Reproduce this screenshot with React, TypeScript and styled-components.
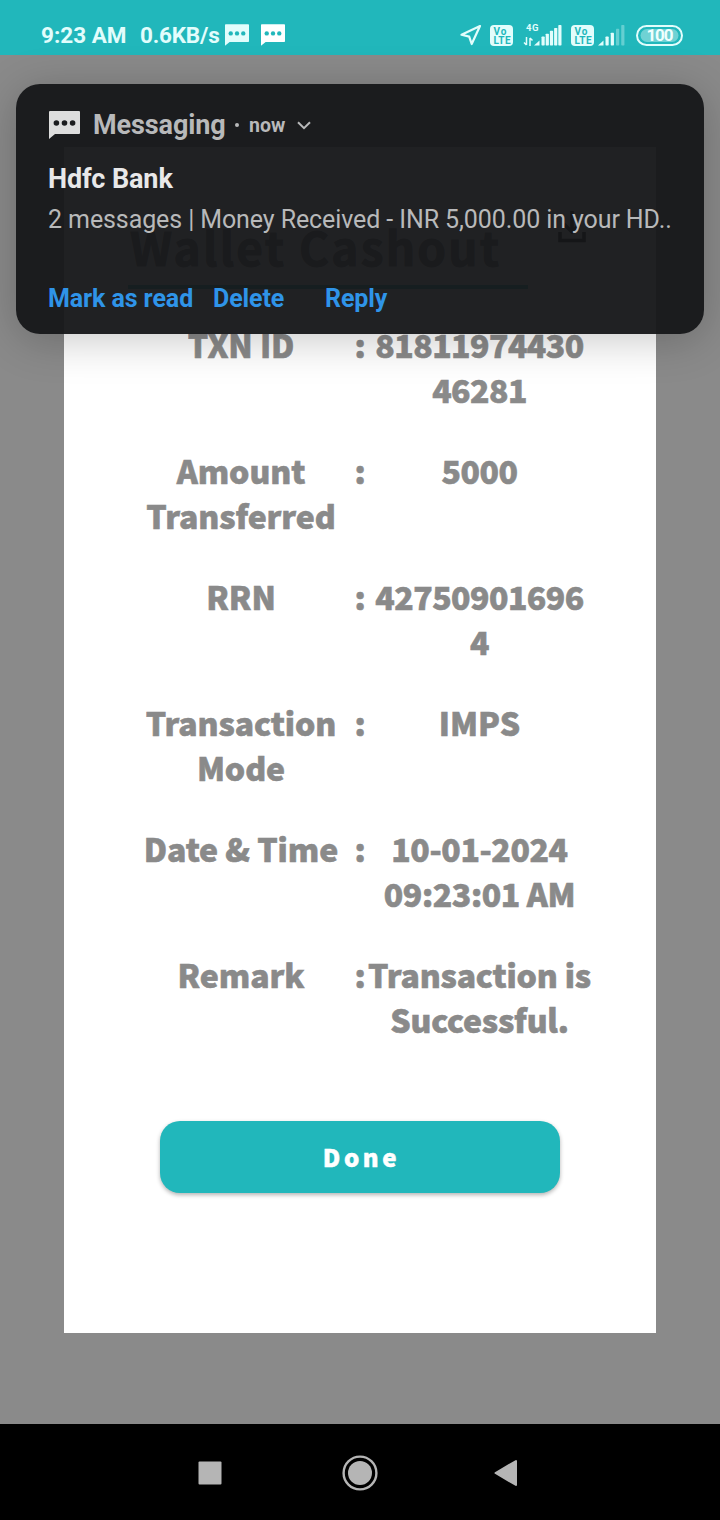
import React from "react";
import styled, { createGlobalStyle } from "styled-components";

const teal = "#21b7bb";
const pale = "#e2fdfc";

const GlobalStyle = createGlobalStyle`
  * { box-sizing: border-box; }
  body { margin: 0; background: #8a8a8a; }
  button { font: inherit; border: 0; background: none; padding: 0; margin: 0; }
  svg { display: block; flex: none; }
`;

const Screen = styled.div`
  position: relative;
  display: flex;
  flex-direction: column;
  width: 720px;
  height: 1520px;
  overflow: hidden;
  background: #8a8a8a;
`;

const StatusBar = styled.header`
  display: flex;
  align-items: flex-start;
  justify-content: space-between;
  height: 55px;
  flex: none;
  padding: 20px 37px 0 41px;
  background: ${teal};
  color: ${pale};
  font: 700 22.5px/30px Roboto, sans-serif;
`;

const StatusGroup = styled.div`
  display: flex;
  align-items: center;
  height: 30px;
`;

const StatusText = styled.span<{ $width: number; $spacing?: number }>`
  width: ${(p) => p.$width}px;
  letter-spacing: ${(p) => p.$spacing ?? 0}px;
  white-space: nowrap;
`;

const Gap = styled.span<{ $size: number }>`
  width: ${(p) => p.$size}px;
  flex: none;
`;

const Backdrop = styled.main`
  flex: 1;
  display: flex;
  flex-direction: column;
  align-items: center;
  padding-top: 92px;
`;

const Dialog = styled.section`
  display: flex;
  flex-direction: column;
  align-items: center;
  width: 592px;
  height: 1186px;
  background: #fff;
  color: #8a8a8a;
  font: 900 32px/45px "Noto Sans CJK SC", sans-serif;
`;

const DialogHeader = styled.div`
  display: flex;
  align-items: flex-start;
  width: 464px;
  height: 142px;
  padding: 64px 6px 0 2px;
  justify-content: space-between;
`;

const Title = styled.h1`
  margin: 5px 0 0;
  color: #6f6f6f;
  font-size: 46px;
  line-height: 60px;
  letter-spacing: 2.2px;
  -webkit-text-stroke: 1px currentColor;
  white-space: nowrap;
`;

const Rule = styled.hr`
  width: 400px;
  height: 4px;
  margin: -4px 64px 1px 0;
  border: 0;
  background: ${teal};
  align-self: center;
`;

const Details = styled.dl`
  display: flex;
  flex-direction: column;
  gap: 36px;
  width: 464px;
  margin: 32px 0 0;
  -webkit-text-stroke: 0.6px currentColor;
`;

const DetailRow = styled.div`
  display: grid;
  grid-template-columns: 226px 12px 227px;
  height: 90px;
  text-align: center;
  white-space: pre;
`;

const Label = styled.dt`
  margin: 0;
  letter-spacing: -0.1px;
`;

const Value = styled.dd<{ $spacing?: number }>`
  margin: 0;
  letter-spacing: ${(p) => p.$spacing ?? -0.55}px;
`;

const DoneButton = styled.button`
  width: 400px;
  height: 72px;
  margin-top: 79px;
  padding: 0 0 2px 3px;
  border-radius: 20px;
  background: ${teal};
  box-shadow: 0 2px 4px rgba(0, 0, 0, 0.3);
  color: #fff;
  font-size: 24px;
  letter-spacing: 3.6px;
  -webkit-text-stroke: 0.5px currentColor;
`;

const Notification = styled.aside`
  position: absolute;
  left: 16px;
  top: 84px;
  width: 688px;
  height: 250px;
  padding: 23px 32px 0;
  border-radius: 24px;
  background: rgba(22, 23, 25, 0.957);
  box-shadow: 0 6px 44px rgba(0, 0, 0, 0.22);
  color: #b8b9ba;
  font-family: Roboto, sans-serif;
`;

const AppLine = styled.div`
  display: flex;
  align-items: center;
  height: 36px;
`;

const AppName = styled.span`
  width: 134px;
  margin-left: 13px;
  padding-bottom: 1px;
  font-size: 27px;
  line-height: 34px;
  font-weight: 700;
  letter-spacing: -0.1px;
  white-space: nowrap;
`;

const Dot = styled.span`
  width: 4px;
  height: 4px;
  margin: 0 10px 0 8px;
  border-radius: 50%;
  background: currentColor;
`;

const Age = styled.span`
  width: 37px;
  margin-right: 11px;
  font-size: 19.5px;
  font-weight: 700;
`;

const Sender = styled.div`
  margin-top: 19px;
  color: #e8e8e9;
  font-size: 27px;
  line-height: 34px;
  font-weight: 700;
  letter-spacing: -0.1px;
`;

const Message = styled.div`
  margin-top: 7px;
  font-size: 25px;
  line-height: 34px;
  letter-spacing: -0.1px;
  white-space: nowrap;
`;

const Actions = styled.div`
  display: flex;
  margin-top: 45px;
`;

const Action = styled.button<{ $width: number }>`
  width: ${(p) => p.$width}px;
  color: #2f94e8;
  font-size: 25px;
  line-height: 34px;
  font-weight: 700;
  letter-spacing: -0.1px;
  text-align: left;
  white-space: nowrap;
`;

const NavBar = styled.nav`
  display: flex;
  align-items: center;
  height: 96px;
  flex: none;
  padding: 1px 0 0 198px;
  background: #000;
`;

const ChatIcon = ({ width, height, fill, dots }: { width: number; height: number; fill: string; dots: string }) => (
  <svg width={width} height={height} viewBox="0 0 31 28">
    <path d="M1 0H30Q31 0 31 1V22Q31 23 30 23H6L0 28V1Q0 0 1 0Z" fill={fill} />
    <g fill={dots}>
      <circle cx="7.4" cy="12" r="2.8" />
      <circle cx="15.5" cy="12" r="2.8" />
      <circle cx="23.6" cy="12" r="2.8" />
    </g>
  </svg>
);

const LocationIcon = () => (
  <svg width="22" height="22" viewBox="0 0 22 22" fill="none" stroke={pale} strokeWidth="2.2" strokeLinejoin="round">
    <path d="M20 2L1.5 10.7L9.2 12.6L11.7 20Z" />
  </svg>
);

const VolteIcon = () => (
  <svg width="23" height="21" viewBox="0 0 23 21">
    <rect width="23" height="21" rx="4" fill={pale} />
    <g fill={teal} fontFamily="Roboto, sans-serif" fontWeight="700" fontSize="10">
      <text x="3.5" y="9.5" textLength="13">Vo</text>
      <text x="3.5" y="18.5" textLength="17">LTE</text>
    </g>
  </svg>
);

const Bars = ({ count, active }: { count: number; active: number }) => (
  <svg width="28" height="21" viewBox="0 0 28 21" fill={pale}>
    <path d="M0 20.5L5.5 15.5V20.5Z" />
    {Array.from({ length: count }, (_, i) => {
      const step = 21 / count;
      const h = 9 + (11.5 * i) / (count - 1);
      return (
        <rect key={i} x={7.5 + i * step} y={20.5 - h} width="3.2" height={h} rx="0.7" opacity={i < active ? 1 : 0.35} />
      );
    })}
  </svg>
);

const DataIcon = () => (
  <svg width="10" height="24" viewBox="0 0 10 24" overflow="visible">
    <text x="2" y="8" textLength="12.5" fill={pale} fontFamily="Roboto, sans-serif" fontWeight="700" fontSize="9.5">4G</text>
    <path d="M2.5 14V22M0 19.5L2.5 22M6 23V15M6 15L8.5 17.5" stroke={pale} strokeWidth="1.5" fill="none" />
  </svg>
);

const BatteryIcon = () => (
  <svg width="47" height="21" viewBox="0 0 47 21">
    <rect x="1" y="1" width="45" height="19" rx="9.5" fill="none" stroke={pale} strokeWidth="2" />
    <rect x="4.5" y="4" width="38" height="13" rx="6.5" fill="#6fd2d4" />
    <text x="10.5" y="16.2" textLength="27" fill="#effffe" fontFamily="Roboto, sans-serif" fontWeight="700" fontSize="17">100</text>
  </svg>
);

const DownloadIcon = () => (
  <svg width="28" height="32" viewBox="0 0 28 32" fill="none" stroke="#000" strokeWidth="3.5">
    <path d="M14 0V20M6 13L14 21L22 13M2 21V29.5H26V21" />
  </svg>
);

const details: { label: string; value: string; spacing?: number }[] = [
  { label: "TXN ID", value: "81811974430\n46281" },
  { label: "Amount\nTransferred", value: "5000" },
  { label: "RRN", value: "42750901696\n4" },
  { label: "Transaction\nMode", value: "IMPS", spacing: 0 },
  { label: "Date & Time", value: "10-01-2024\n09:23:01 AM", spacing: -0.4 },
  { label: "Remark", value: "Transaction is\nSuccessful.", spacing: -0.2 },
];

export default function App() {
  return (
    <Screen>
      <GlobalStyle />
      <StatusBar>
        <StatusGroup>
          <StatusText $width={99}>9:23 AM</StatusText>
          <StatusText $width={84} $spacing={-0.2}>0.6KB/s</StatusText>
          <Gap $size={1} />
          <ChatIcon width={24} height={22} fill={pale} dots={teal} />
          <Gap $size={12} />
          <ChatIcon width={24} height={22} fill="#fff" dots={teal} />
        </StatusGroup>
        <StatusGroup>
          <LocationIcon />
          <Gap $size={8} />
          <VolteIcon />
          <Gap $size={11} />
          <DataIcon />
          <Bars count={5} active={5} />
          <Gap $size={9} />
          <VolteIcon />
          <Gap $size={4} />
          <Bars count={4} active={2} />
          <Gap $size={10} />
          <BatteryIcon />
        </StatusGroup>
      </StatusBar>

      <Backdrop>
        <Dialog>
          <DialogHeader>
            <Title>Wallet Cashout</Title>
            <DownloadIcon />
          </DialogHeader>
          <Rule />
          <Details>
            {details.map((d) => (
              <DetailRow key={d.label}>
                <Label>{d.label}</Label>
                <span>:</span>
                <Value $spacing={d.spacing}>{d.value}</Value>
              </DetailRow>
            ))}
          </Details>
          <DoneButton>Done</DoneButton>
        </Dialog>
      </Backdrop>

      <NavBar>
        <svg width="24" height="24" viewBox="0 0 24 24">
          <rect x="0.5" y="0.5" width="23" height="23" rx="1" fill="#b5b5b5" />
        </svg>
        <Gap $size={119.5} />
        <svg width="36" height="36" viewBox="0 0 36 36">
          <circle cx="18" cy="18" r="16.4" fill="none" stroke="#b5b5b5" strokeWidth="2.4" />
          <circle cx="18" cy="18" r="12" fill="#b5b5b5" />
        </svg>
        <Gap $size={116.5} />
        <svg width="24" height="28" viewBox="0 0 24 28">
          <path d="M1.5 14L22 2V26Z" fill="#b5b5b5" stroke="#b5b5b5" strokeWidth="2" strokeLinejoin="round" />
        </svg>
      </NavBar>

      <Notification>
        <AppLine>
          <Gap $size={1} />
          <ChatIcon width={31} height={28} fill="#dddddd" dots="#1b1c1e" />
          <AppName>Messaging</AppName>
          <Dot />
          <Age>now</Age>
          <svg width="14" height="9" viewBox="0 0 14 9" fill="none" stroke="#b8b9ba" strokeWidth="2">
            <path d="M1 1.2L7 7.2L13 1.2" />
          </svg>
        </AppLine>
        <Sender>Hdfc Bank</Sender>
        <Message>2 messages | Money Received - INR 5,000.00 in your HD..</Message>
        <Actions>
          <Action $width={165}>Mark as read</Action>
          <Action $width={112}>Delete</Action>
          <Action $width={70}>Reply</Action>
        </Actions>
      </Notification>
    </Screen>
  );
}
